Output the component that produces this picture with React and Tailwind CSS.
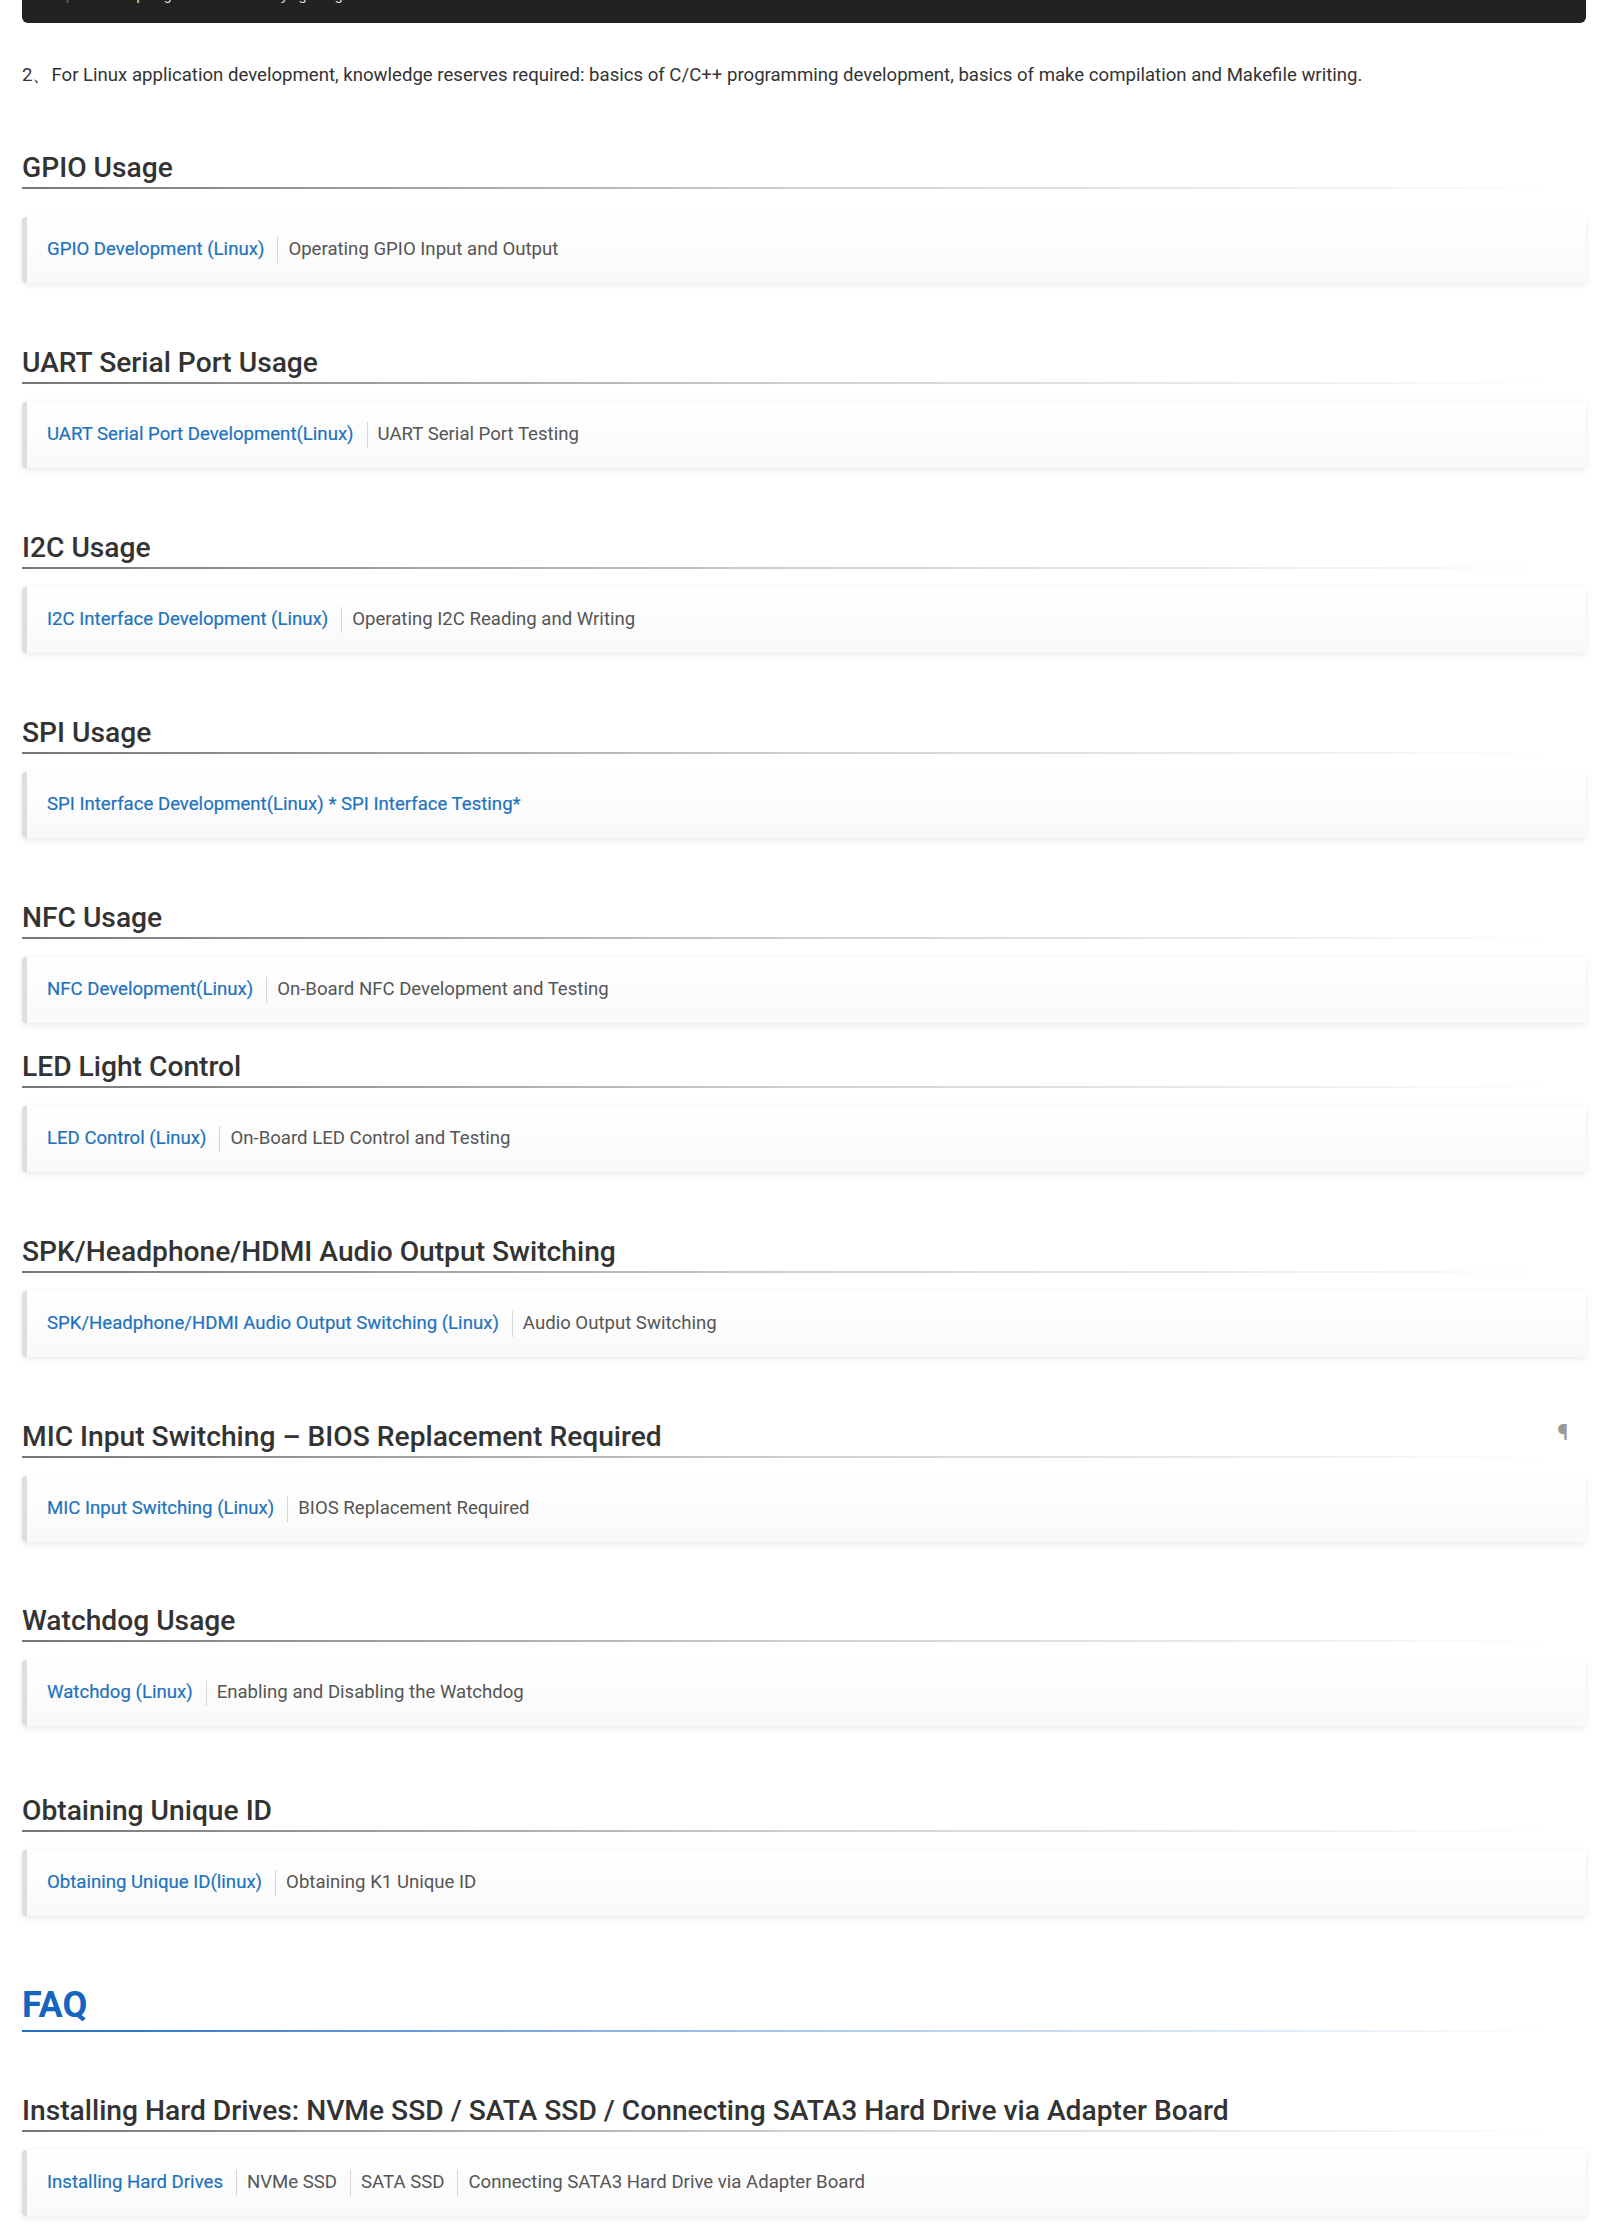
import React from 'react';

const sections = [
  { title: 'GPIO Usage', gap: 61, cardGap: 28, items: [{ link: 'GPIO Development (Linux)' }, { text: 'Operating GPIO Input and Output' }] },
  { title: 'UART Serial Port Usage', gap: 62, cardGap: 18, items: [{ link: 'UART Serial Port Development(Linux)' }, { text: 'UART Serial Port Testing' }] },
  { title: 'I2C Usage', gap: 62, cardGap: 18, items: [{ link: 'I2C Interface Development (Linux)' }, { text: 'Operating I2C Reading and Writing' }] },
  { title: 'SPI Usage', gap: 62, cardGap: 18, items: [{ link: 'SPI Interface Development(Linux) * SPI Interface Testing*' }] },
  { title: 'NFC Usage', gap: 62, cardGap: 18, items: [{ link: 'NFC Development(Linux)' }, { text: 'On-Board NFC Development and Testing' }] },
  { title: 'LED Light Control', gap: 26, cardGap: 18, items: [{ link: 'LED Control (Linux)' }, { text: 'On-Board LED Control and Testing' }] },
  { title: 'SPK/Headphone/HDMI Audio Output Switching', gap: 62, cardGap: 18, items: [{ link: 'SPK/Headphone/HDMI Audio Output Switching (Linux)' }, { text: 'Audio Output Switching' }] },
  { title: 'MIC Input Switching – BIOS Replacement Required', gap: 62, cardGap: 18, anchor: true, items: [{ link: 'MIC Input Switching (Linux)' }, { text: 'BIOS Replacement Required' }] },
  { title: 'Watchdog Usage', gap: 61, cardGap: 18, items: [{ link: 'Watchdog (Linux)' }, { text: 'Enabling and Disabling the Watchdog' }] },
  { title: 'Obtaining Unique ID', gap: 67, cardGap: 18, items: [{ link: 'Obtaining Unique ID(linux)' }, { text: 'Obtaining K1 Unique ID' }] },
];

const faq = [
  {
    title: 'Installing Hard Drives: NVMe SSD / SATA SSD / Connecting SATA3 Hard Drive via Adapter Board',
    items: [
      { link: 'Installing Hard Drives' },
      { text: 'NVMe SSD' },
      { text: 'SATA SSD' },
      { text: 'Connecting SATA3 Hard Drive via Adapter Board' },
    ],
  },
];

const LinkCard = ({ items, cardGap }) => (
  <div
    style={{ marginTop: cardGap }}
    className="flex h-[66px] items-center rounded-[4px] border-l-[5px] border-[#dedede] bg-gradient-to-b from-white to-[#f9f9f9] pl-[20px] text-[18.6px] shadow-[0_2px_7px_rgba(0,0,0,0.09)]"
  >
    {items.map((it, i) => (
      <React.Fragment key={i}>
        {i > 0 && <span className="ml-[13px] mr-[10px] h-[26px] w-px bg-[#d6d6d6]" />}
        {it.link ? (
          <a href="#" className="text-[#1e73be] no-underline [-webkit-text-stroke:0.2px_#1e73be]">{it.link}</a>
        ) : (
          <span className="text-[#555]">{it.text}</span>
        )}
      </React.Fragment>
    ))}
  </div>
);

const SectionHeading = ({ title, anchor }) => (
  <div>
    <div className="flex items-start justify-between pr-[18px]">
      <h3 className="text-[28.2px] font-medium leading-[36px] text-[#333]">{title}</h3>
      {anchor && <span className="-mt-[3px] text-[22px] font-bold text-[#999]">¶</span>}
    </div>
    <div className="mt-[1px] h-[2px] w-[98%] bg-gradient-to-r from-[#777] via-[#cfcfcf] to-transparent" />
  </div>
);

export default function App() {
  return (
    <div className="w-[1600px] bg-white pb-[17px] pl-[22px] pr-[14px] font-['Roboto',sans-serif]">
      {/* tail of the code block above */}
      <div className="h-[23px] overflow-hidden rounded-b-[6px] bg-[#222]">
        <div className="-mt-[13px] flex items-center pl-[13px] font-['Liberation_Mono',monospace] text-[15px] leading-[20px] text-[#ddd]">
          <span className="text-[#888]">13</span>
          <span className="mx-[10px] text-[#777]">|</span>
          <span>sudo apt-get install -y gcc g++ make</span>
        </div>
      </div>

      <p className="mt-[38px] text-[18.6px] leading-[28px] text-[#333]">
        2、For Linux application development, knowledge reserves required: basics of C/C++ programming development, basics of make compilation and Makefile writing.
      </p>

      {sections.map((s) => (
        <section key={s.title} style={{ marginTop: s.gap }}>
          <SectionHeading title={s.title} anchor={s.anchor} />
          <LinkCard items={s.items} cardGap={s.cardGap} />
        </section>
      ))}

      <div className="mt-[67px]">
        <h2 className="text-[36px] font-bold leading-[44px] text-[#1565c0]">FAQ</h2>
        <div className="mt-[3px] h-[2px] w-[98%] bg-gradient-to-r from-[#1a6cc4] via-[#a9c8ea] to-transparent" />
      </div>

      {faq.map((s) => (
        <section key={s.title} className="mt-[61px]">
          <SectionHeading title={s.title} />
          <LinkCard items={s.items} cardGap={18} />
        </section>
      ))}
    </div>
  );
}
